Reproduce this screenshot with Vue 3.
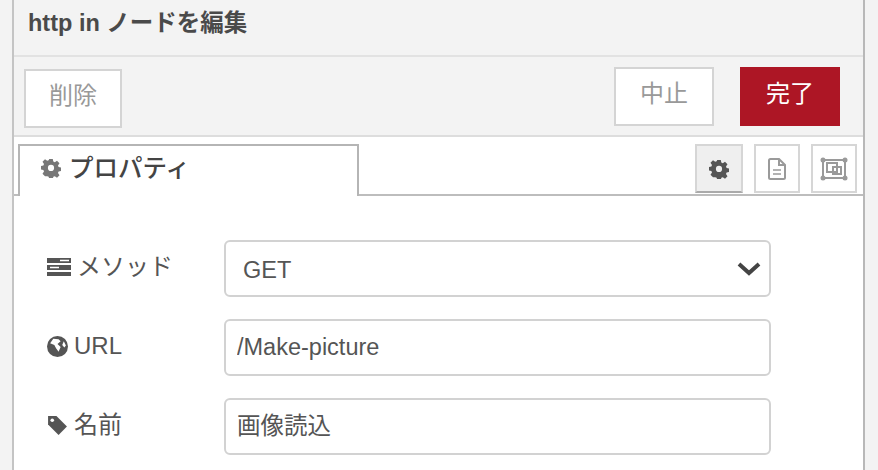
<template>
  <div class="page">
    <div class="tray">
      <div class="title">http in ノードを編集</div>

      <div class="toolbar">
        <button class="btn del">削除</button>
        <div class="right">
          <button class="btn">中止</button>
          <button class="btn primary">完了</button>
        </div>
      </div>

      <div class="tabbar">
        <div class="tab">
          <svg class="ic gear" viewBox="0 0 20 20"><use href="#gear" /></svg>
          <span>プロパティ</span>
        </div>
        <div class="tools">
          <button class="tool on">
            <svg width="20" height="20" viewBox="0 0 20 20">
              <defs>
                <g id="gear">
                  <path d="M8.2 1h3.6l.5 2.6 1.5.6 2.2-1.5 2.5 2.5-1.500 2.200.6 1.500 2.400.5v3.600l-2.400.5-.6 1.500 1.500 2.200-2.500 2.500-2.200-1.500-1.500.6-.5 2.400H8.200l-.5-2.400-1.500-.6L4 18.200l-2.500-2.500L3 13.500l-.6-1.500L0 11.500V8l2.400-.5.6-1.500L1.500 3.800 4 1.300l2.200 1.500 1.500-.6zM10 6.800a3.100 3.100 0 1 0 0 6.200 3.100 3.100 0 0 0 0-6.200z" fill="currentColor" fill-rule="evenodd" />
                </g>
              </defs>
              <use href="#gear" />
            </svg>
          </button>
          <button class="tool">
            <svg width="22" height="24" viewBox="0 0 22 24" fill="none" stroke="#9a9a9a" stroke-width="2">
              <path d="M4.500 2H13l6 6v12.500a1.500 1.500 0 0 1-1.500 1.500h-13A1.500 1.500 0 0 1 3 20.500v-17A1.500 1.500 0 0 1 4.500 2z" />
              <path d="M13 2v6h6" />
              <path d="M7 13h8M7 17h8" stroke-width="1.500" />
            </svg>
          </button>
          <button class="tool">
            <svg width="28" height="24" viewBox="0 0 28 24" fill="none" stroke="#9a9a9a" stroke-width="2">
              <rect x="3" y="3" width="22" height="18" />
              <path d="M7 6h10v9H7z" />
              <path d="M13 10h8v7h-8z" />
              <g fill="#9a9a9a" stroke="none">
                <circle cx="3" cy="3" r="2.500" />
                <circle cx="25" cy="3" r="2.500" />
                <circle cx="3" cy="21" r="2.500" />
                <circle cx="25" cy="21" r="2.500" />
              </g>
            </svg>
          </button>
        </div>
      </div>

      <form class="form" @submit.prevent>
        <div class="row">
          <label class="lbl">
            <svg class="ic" viewBox="0 0 24 20">
              <path d="M0 1h24v5H0zM0 8h24v5H0zM0 15h24v4H0z" fill="currentColor" />
              <path d="M13 3.500h9M3 10.500h9" stroke="#fff" stroke-width="1.500" />
            </svg>
            <span>メソッド</span>
          </label>
          <div class="select">
            <span class="val">GET</span>
            <svg width="24" height="16" viewBox="0 0 24 16" fill="none" stroke="#444" stroke-width="4">
              <path d="M2 3l10 9 10-9" />
            </svg>
          </div>
        </div>
        <div class="row">
          <label class="lbl">
            <svg class="ic small" viewBox="0 0 20 20">
              <circle cx="10" cy="10" r="10" fill="currentColor" />
              <path d="M6 2.500l5 .5 2 2-3 2.500 3 3-2 4.500-2.500-3.500-1.500-3L3 7zM16 5l2 4-1.500 2-2-2.500z" fill="#fff" />
            </svg>
            <span>URL</span>
          </label>
          <input class="input" type="text" value="/Make-picture" />
        </div>
        <div class="row">
          <label class="lbl">
            <svg class="ic small" viewBox="0 0 20 20">
              <path d="M1 1h8l10 10-8 8L1 9z" fill="currentColor" />
              <circle cx="5" cy="5" r="1.700" fill="#fff" />
            </svg>
            <span>名前</span>
          </label>
          <input class="input cjk" type="text" value="画像読込" />
        </div>
      </form>
    </div>
  </div>
</template>

<script setup>
</script>

<style>
html,
body {
  margin: 0;
  background: #f3f3f3;
}
</style>

<style scoped>
.page {
  width: 878px;
  height: 470px;
  overflow: hidden;
  background: #f3f3f3;
  font-family: "Liberation Sans", "Noto Sans CJK JP", sans-serif;
  color: #555;
}

.tray {
  box-sizing: border-box;
  width: 853px;
  height: 470px;
  margin-left: 12px;
  background: #fff;
  border-left: 2px solid #c4c4c4;
  border-right: 2px solid #b8b8b8;
}

.title {
  box-sizing: border-box;
  height: 57px;
  padding: 9px 0 0 14px;
  background: #f3f3f3;
  border-bottom: 2px solid #e2e2e2;
  font-size: 23.500px;
  line-height: 28px;
  font-weight: 700;
  color: #4a4a4a;
}

.toolbar {
  box-sizing: border-box;
  height: 80px;
  padding: 10px 23px 0 10px;
  display: flex;
  justify-content: space-between;
  background: #f3f3f3;
  border-bottom: 2px solid #ddd;
}

.right {
  display: flex;
  gap: 26px;
}

.btn {
  box-sizing: border-box;
  width: 100px;
  height: 59px;
  padding: 0 0 5px;
  background: #fff;
  border: 2px solid #d4d4d4;
  color: #999;
  font: inherit;
  font-size: 24px;
  line-height: 28px;
}

.del {
  width: 98px;
  margin-top: 2px;
}

.primary {
  background: #ad1625;
  border-color: #ad1625;
  color: #fff;
}

.tabbar {
  box-sizing: border-box;
  height: 59px;
  padding: 7px 6px 0 4px;
  display: flex;
  justify-content: space-between;
  align-items: flex-start;
  border-bottom: 2px solid #bdbdbd;
}

.tab {
  box-sizing: border-box;
  width: 341px;
  height: 52px;
  padding: 9px 0 0 21px;
  display: flex;
  align-items: flex-start;
  gap: 8px;
  background: #fff;
  border: 2px solid #b5b5b5;
  border-bottom: none;
  font-size: 24.500px;
  line-height: 28px;
  font-weight: 500;
  color: #444;
}

.tab .gear {
  width: 20px;
  height: 20px;
  margin-top: 3px;
  color: #777;
}

.tools {
  display: flex;
  gap: 11px;
}

.tool {
  box-sizing: border-box;
  width: 46px;
  height: 49px;
  padding: 0;
  display: flex;
  align-items: center;
  justify-content: center;
  background: #fff;
  border: 2px solid #d6d6d6;
  color: #555;
}

.tool.on {
  width: 48px;
  background: #efefef;
  border-bottom-color: #aaa;
}

.form {
  padding: 44px 0 0 33px;
  display: flex;
  flex-direction: column;
  gap: 22px;
}

.row {
  display: flex;
  align-items: flex-start;
}

.lbl {
  width: 177px;
  height: 57px;
  display: flex;
  align-items: center;
  gap: 6px;
  padding-bottom: 3px;
  box-sizing: border-box;
  font-size: 24px;
  line-height: 28px;
  color: #555;
}

.ic {
  width: 24px;
  height: 20px;
  flex: none;
  color: #555;
}

.ic.small {
  width: 21px;
  height: 21px;
}

.select,
.input {
  box-sizing: border-box;
  width: 547px;
  height: 57px;
  background: #fff;
  border: 2px solid #d2d2d2;
  border-radius: 6px;
  color: #555;
  font-family: inherit;
  font-size: 23.500px;
  line-height: 28px;
}

.select {
  display: flex;
  align-items: center;
  justify-content: space-between;
  padding: 0 8px 0 17px;
}

.val {
  margin-top: 2px;
}

.input {
  padding: 0 11px;
  outline: none;
}

.input.cjk {
  padding-bottom: 6px;
}
</style>
